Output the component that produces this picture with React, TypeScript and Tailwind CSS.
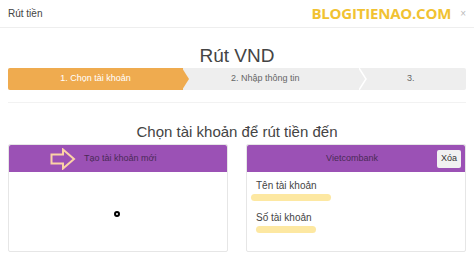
export default function App() {
    return (
        <div className="w-[474px] h-[259px] bg-white overflow-hidden font-['Liberation_Sans',Arial,sans-serif] text-[#555]">
            <div className="h-[28px] flex items-center justify-between pl-[8px] pr-[8px] border-b border-[#eee]">
                <span className="text-[10px] text-[#444]">Rút tiền</span>
                <div className="flex items-center gap-[9px]">
                    <span className="text-[15px] font-bold text-[#f1c232] font-['Open_Sans',sans-serif] tracking-[-0.2px]">
                        BLOGITIENAO.COM
                    </span>
                    <span className="text-[10px] text-[#bbb]">×</span>
                </div>
            </div>

            <h1 className="text-center text-[19px] text-[#444] mt-[17px] leading-[22px]">
                Rút VND
            </h1>

            <div className="mx-[8px] mt-[1px] h-[22px] flex bg-[#eeeeee] rounded-[2px] text-[9px]">
                <div className="relative w-[175px] bg-[#efab4f] text-white flex items-center justify-center rounded-l-[2px]">
                    1. Chọn tài khoản
                    <svg className="absolute right-[-7px] top-0" width="8" height="22" viewBox="0 0 8 22">
                        <polygon points="0,0 7,11 0,22" fill="#efab4f" />
                    </svg>
                </div>
                <div className="relative flex-1 flex items-center pl-[48px] text-[#666]">
                    2. Nhập thông tin
                    <svg className="absolute right-[-4px] top-0" width="8" height="22" viewBox="0 0 8 22">
                        <polyline points="0,0 7,11 0,22" fill="none" stroke="#fff" strokeWidth="1.5" />
                    </svg>
                </div>
                <div className="w-[103px] flex items-center pl-[44px] text-[#666]">3.</div>
            </div>

            <div className="mx-[8px] mt-[12px] border-t border-[#f2f2f2]" />

            <h2 className="text-center text-[15px] text-[#444] mt-[20px] leading-[18px]">
                Chọn tài khoản để rút tiền đến
            </h2>

            <div className="mx-[8px] mt-[3px] flex gap-[18px]">
                <div className="w-[220px] h-[108px] border border-[#e6e6e6] rounded-[2px] flex flex-col">
                    <div className="h-[27px] bg-[#9b51b5] flex items-center pl-[41px] gap-[8px] rounded-t-[2px]">
                        <svg width="26" height="22" viewBox="0 0 26 22">
                            <path
                                d="M1.5 6.5 H13 V1.5 L24 11 L13 20.5 V15.5 H1.5 Z"
                                fill="none"
                                stroke="#fbd3a6"
                                strokeWidth="2"
                                strokeLinejoin="miter"
                            />
                        </svg>
                        <span className="text-[9px] text-[#4a2a55]">Tạo tài khoản mới</span>
                    </div>
                    <div className="flex-1 flex items-center justify-center">
                        <div className="w-[6px] h-[6px] rounded-full border-[2px] border-black ml-[-2px] mt-[4px]" />
                    </div>
                </div>

                <div className="w-[220px] h-[108px] border border-[#e6e6e6] rounded-[2px] flex flex-col">
                    <div className="h-[27px] bg-[#9b51b5] flex items-center justify-end pr-[4px] rounded-t-[2px]">
                        <span className="flex-1 text-center text-[9px] text-[#4a2a55] pl-[20px]">Vietcombank</span>
                        <button className="h-[18px] px-[4px] bg-[#f1f1f1] rounded-[2px] text-[9px] text-[#333]">
                            Xóa
                        </button>
                    </div>
                    <div className="pl-[9px] pt-[8px] text-[10px] text-[#444]">
                        <div className="leading-[12px]">Tên tài khoản</div>
                        <div className="mt-[2px] ml-[-5px] w-[80px] h-[7px] bg-[#fde8a2] rounded-full" />
                        <div className="leading-[12px] mt-[11px]">Số tài khoản</div>
                        <div className="mt-[2px] w-[60px] h-[7px] bg-[#fde8a2] rounded-full" />
                    </div>
                </div>
            </div>
        </div>
    );
}
